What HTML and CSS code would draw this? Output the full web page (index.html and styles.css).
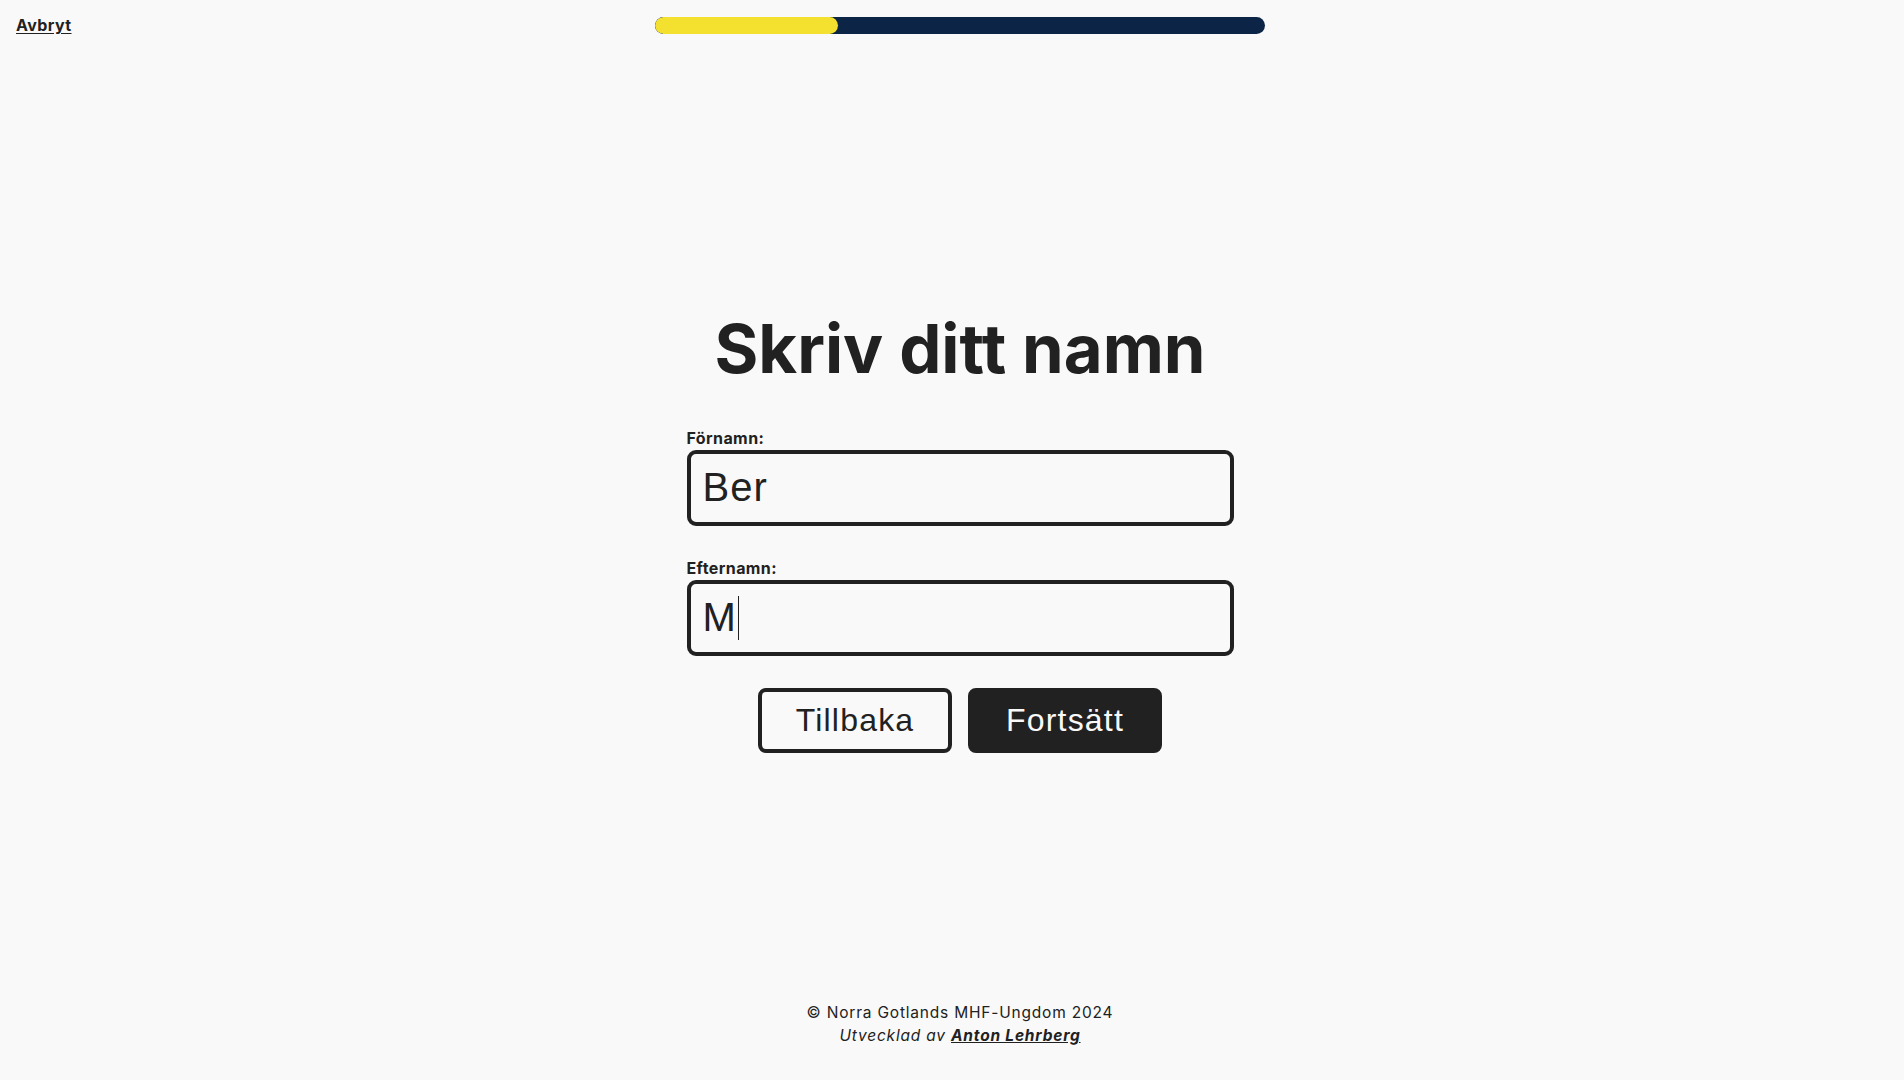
FILE: index.html
```html
<!DOCTYPE html>
<html lang="sv">
<head>
<meta charset="utf-8">
<title>Skriv ditt namn</title>
<link rel="stylesheet" href="styles.css">
</head>
<body>
<div class="page">
  <header class="topbar">
    <a class="cancel" href="#">Avbryt</a>
    <div class="progress"><div class="progress-fill" style="width: 30%"></div></div>
    <div></div>
  </header>
  <main class="main">
    <form class="form">
      <h1 class="title">Skriv ditt namn</h1>
      <div class="field">
        <label class="label" for="first">Förnamn:</label>
        <input class="input" id="first" type="text" value="Ber">
      </div>
      <div class="field">
        <label class="label" for="last">Efternamn:</label>
        <div class="input-wrap">
          <input class="input" id="last" type="text" value="M">
          <span class="caret"></span>
        </div>
      </div>
      <div class="actions">
        <button type="button" class="btn btn-outline">Tillbaka</button>
        <button type="button" class="btn btn-solid">Fortsätt</button>
      </div>
    </form>
  </main>
  <footer class="footer">
    <p class="footer-line">© Norra Gotlands MHF-Ungdom 2024</p>
    <p class="footer-line footer-credit">Utvecklad av <a href="#" class="credit-link">Anton Lehrberg</a></p>
  </footer>
</div>
</body>
</html>
```

FILE: styles.css
```css
* { box-sizing: border-box; }
html, body { margin: 0; padding: 0; }
body {
  background: #f9f9f9;
  color: #212121;
  font-family: Inter, "Open Sans", sans-serif;
}
.page {
  min-height: 100vh;
  display: flex;
  flex-direction: column;
  padding-left: 16px;
}
.topbar {
  display: grid;
  grid-template-columns: 1fr 610px 1fr;
  align-items: center;
  padding: 17px 0;
}
.cancel {
  justify-self: start;
  color: #212121;
  font-weight: 700;
  font-size: 16px;
  line-height: 17px;
  letter-spacing: 0.4px;
  text-decoration: underline;
  text-underline-offset: 2px;
}
.progress {
  height: 17px;
  border-radius: 9px;
  background: #0c2546;
  overflow: hidden;
}
.progress-fill {
  height: 100%;
  background: #f4e02e;
  border-radius: 9px;
}
.main {
  flex: 1;
  display: flex;
  align-items: center;
  justify-content: center;
  padding-top: 8px;
}
.form {
  width: 547px;
  display: flex;
  flex-direction: column;
}
.title {
  margin: 0 0 40px;
  text-align: center;
  font-size: 67px;
  font-weight: 700;
  line-height: 81px;
  letter-spacing: 0;
}
.field {
  display: flex;
  flex-direction: column;
  gap: 3px;
  margin-bottom: 33px;
}
.field + .field { margin-bottom: 32px; }
.label {
  font-size: 16px;
  font-weight: 700;
  line-height: 18px;
  letter-spacing: 0.4px;
}
.input-wrap {
  position: relative;
}
.input {
  display: block;
  width: 100%;
  height: 76px;
  border: 4px solid #212121;
  border-radius: 9px;
  background: #f9f9f9;
  color: #212121;
  padding: 0 12px;
  font-family: "Liberation Sans", Arial, sans-serif;
  font-size: 40px;
  letter-spacing: 1px;
  outline: none;
}
.caret {
  position: absolute;
  left: 51px;
  top: 16px;
  width: 1px;
  height: 44px;
  background: #212121;
}
.actions {
  display: flex;
  justify-content: center;
  gap: 16px;
}
.btn {
  width: 194px;
  height: 65px;
  border-radius: 8px;
  border: 4px solid #212121;
  font-family: "Liberation Sans", Arial, sans-serif;
  font-size: 32px;
  letter-spacing: 1.2px;
  padding: 0;
  cursor: pointer;
}
.btn-outline { background: #f9f9f9; color: #212121; }
.btn-solid { background: #212121; color: #f9f9f9; }
.footer {
  text-align: center;
  padding-bottom: 33px;
}
.footer-line {
  margin: 0;
  font-size: 15.5px;
  line-height: 23px;
  letter-spacing: 0.8px;
}
.footer-credit { font-style: italic; }
.credit-link {
  color: #212121;
  font-weight: 700;
  text-decoration: underline;
}
```
